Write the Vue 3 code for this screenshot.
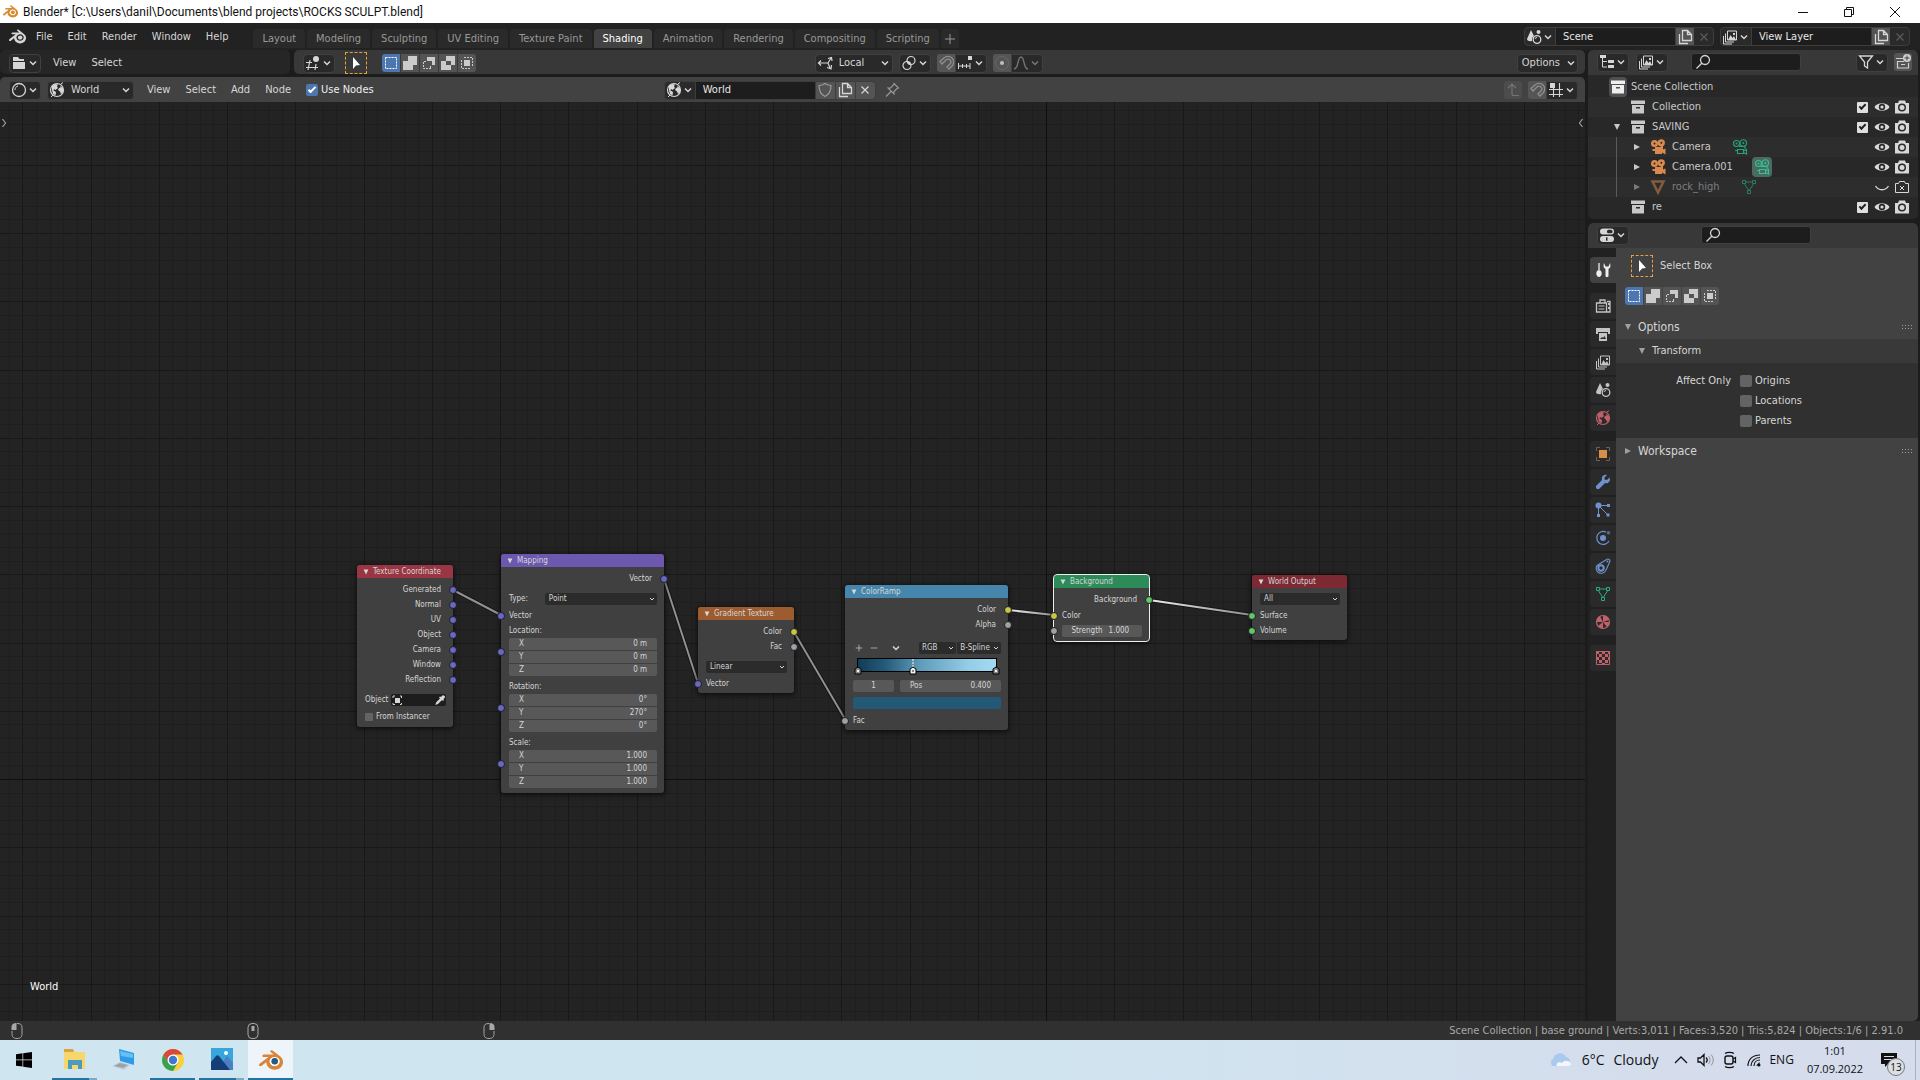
<template>
  <div class="screen">
    <header class="titlebar">
      <Ico name="blender" :size="15" class="orange" />
      <span class="title">Blender* [C:\Users\danil\Documents\blend projects\ROCKS SCULPT.blend]</span>
      <button class="win" aria-label="Minimize"><Ico name="min" :size="12" /></button>
      <button class="win" aria-label="Restore"><Ico name="restore" :size="12" /></button>
      <button class="win" aria-label="Close"><Ico name="close" :size="12" /></button>
    </header>

    <div class="topbar">
      <Ico name="blender" :size="17" />
      <nav class="menus main-menu">
        <button v-for="m in mainMenu" :key="m">{{ m }}</button>
      </nav>
      <div class="tabs">
        <button v-for="t in workspaces" :key="t" :class="{ active: t === workspace }" @click="workspace = t">{{ t }}</button>
        <button class="add" aria-label="Add workspace"><Ico name="plus" :size="12" /></button>
      </div>
      <div class="fill"></div>
      <div v-for="d in datablocks" :key="d.label" class="datablock">
        <button class="drop" :aria-label="d.label"><Ico :name="d.icon" /><Ico name="chev" :size="12" /></button>
        <input v-model="d.name" :aria-label="d.label">
        <button class="act" aria-label="New"><Ico name="copy" /></button>
        <button class="off" aria-label="Remove"><Ico name="x" /></button>
      </div>
    </div>

    <main class="work">
      <section class="left">
        <div class="row-one">
          <div class="bar files">
            <button class="box" aria-label="Editor type"><Ico name="folder" /><Ico name="chev" :size="12" /></button>
            <nav class="menus">
              <button>View</button>
              <button>Select</button>
            </nav>
          </div>
          <div class="bar view3d">
            <button class="box" aria-label="Editor type"><Ico name="viewport" /><Ico name="chev" :size="12" /></button>
            <button class="tool" aria-label="Select Box"><Ico name="cursor" /></button>
            <div class="modes">
              <button v-for="m in modes" :key="m" :class="{ active: m === mode }" :aria-label="m" @click="mode = m"><Ico :name="m" /></button>
            </div>
            <div class="space-a"></div>
            <div class="group">
              <div class="box pick local">
                <Ico name="axes" />
                <select aria-label="Orientation"><option>Local</option></select>
                <Ico name="chev" :size="12" />
              </div>
              <button class="box" aria-label="Pivot"><Ico name="link" /><Ico name="chev" :size="12" /></button>
              <div class="joined">
                <button class="lit" aria-label="Snap"><Ico name="magnet" /></button>
                <button class="box" aria-label="Snapping"><Ico name="snap" /><Ico name="chev" :size="12" /></button>
              </div>
              <div class="joined">
                <button class="lit" aria-label="Proportional editing"><Ico name="dot" /></button>
                <button class="box faded" aria-label="Falloff"><Ico name="curve" /><Ico name="chev" :size="12" /></button>
              </div>
            </div>
            <div class="space-b"></div>
            <button class="box options">Options<Ico name="chev" :size="12" /></button>
          </div>
        </div>

        <div class="bar shader">
          <button class="box" aria-label="Editor type"><Ico name="sphere" /><Ico name="chev" :size="12" /></button>
          <div class="box pick kind">
            <Ico name="world" />
            <select aria-label="Shader type"><option>World</option></select>
            <Ico name="chev" :size="12" />
          </div>
          <nav class="menus">
            <button>View</button>
            <button>Select</button>
            <button>Add</button>
            <button>Node</button>
          </nav>
          <label class="check blue"><input v-model="useNodes" type="checkbox">Use Nodes</label>
          <div class="space-c"></div>
          <div class="datablock wide">
            <button class="drop" aria-label="Browse world"><Ico name="world" /><Ico name="chev" :size="12" /></button>
            <input v-model="world" aria-label="World">
            <button class="act dim" aria-label="Fake user"><Ico name="shield" /></button>
            <button class="act" aria-label="New world"><Ico name="copy" /></button>
            <button class="act" aria-label="Unlink"><Ico name="x" /></button>
          </div>
          <button class="pin" aria-label="Pin"><Ico name="pin" /></button>
          <div class="space-d"></div>
          <div class="group">
            <button class="lit parent" aria-label="Parent tree"><Ico name="up" /></button>
            <div class="joined">
              <button class="lit" aria-label="Snap"><Ico name="magnet" /></button>
              <button class="box" aria-label="Snap element"><Ico name="gridsnap" /><Ico name="chev" :size="12" /></button>
            </div>
          </div>
        </div>

        <div class="canvas">
          <svg class="layer">
            <defs>
              <linearGradient id="wire" x1="0" x2="1"><stop offset="0" stop-color="#eee" /><stop offset="1" stop-color="#8c8c8c" /></linearGradient>
            </defs>
            <line v-for="l in gridLines" :key="l.key" :x1="l.x1" :y1="l.y1" :x2="l.x2" :y2="l.y2" :stroke="l.color" />
            <g v-for="l in links" :key="l.x1" stroke-linecap="round">
              <line :x1="l.x1" :y1="l.y1" :x2="l.x2" :y2="l.y2" stroke="#151515" stroke-width="4" />
              <line :x1="l.x1" :y1="l.y1" :x2="l.x2" :y2="l.y2" :stroke="l.lit ? 'url(#wire)' : '#909090'" stroke-width="2" />
            </g>
          </svg>

          <article v-for="n in nodes" :key="n.title" class="node" :class="{ selected: n.selected }" :style="{ left: n.x + 'px', top: n.y + 'px', width: n.w + 'px' }">
            <header :style="{ background: n.color }"><Ico name="down" :size="8" />{{ n.title }}</header>
            <div class="node-body">
              <template v-for="(r, i) in n.rows" :key="i">
                <div v-if="r.type === 'out'" class="socket-row out">{{ r.label }}<i class="socket" :class="r.socket"></i></div>
                <div v-else-if="r.type === 'in'" class="socket-row in"><i class="socket" :class="r.socket"></i>{{ r.label }}</div>
                <div v-else-if="r.type === 'select'" class="node-select" :class="{ tight: r.tight }">
                  <span v-if="r.label">{{ r.label }}</span>
                  <div class="field pick"><select :aria-label="r.label || r.value"><option>{{ r.value }}</option></select><Ico name="chev" :size="8" /></div>
                </div>
                <div v-else-if="r.type === 'vector'" class="vector">
                  <p>{{ r.label }}:</p>
                  <div class="vector-fields">
                    <i class="socket purple"></i>
                    <label v-for="(v, a) in r.fields" :key="a"><span>{{ a }}</span><input :value="v"></label>
                  </div>
                </div>
                <label v-else-if="r.type === 'object'" class="object">Object
                  <span class="object-field"><Ico name="object" :size="10" /><input aria-label="Object"><Ico name="dropper" :size="10" /></span>
                </label>
                <label v-else-if="r.type === 'check'" class="check small"><input type="checkbox">{{ r.label }}</label>
                <label v-else-if="r.type === 'number'" class="strength"><i class="socket gray"></i><span>{{ r.label }}</span><input :value="r.value"></label>
                <div v-else-if="r.type === 'ramp'" class="ramp">
                  <div class="ramp-tools">
                    <button aria-label="Add stop"><Ico name="plus" :size="8" /></button>
                    <button aria-label="Remove stop"><Ico name="minus" :size="8" /></button>
                    <button class="more" aria-label="Tools"><Ico name="chev" :size="12" /></button>
                    <div class="field pick"><select aria-label="Color mode"><option>RGB</option></select><Ico name="chev" :size="8" /></div>
                    <div class="field pick"><select aria-label="Interpolation"><option>B-Spline</option></select><Ico name="chev" :size="8" /></div>
                  </div>
                  <div class="gradient">
                    <svg v-for="s in stops" :key="s" class="stop" :style="{ left: s + '%' }" width="8" height="18" viewBox="0 0 8 18">
                      <path v-if="s === 40" d="M4 2v9" stroke="#fff" stroke-dasharray="2 1" />
                      <path d="M1 17v-5l3-2 3 2v5z" :fill="s === 40 ? '#eee' : '#888'" stroke="#000" />
                      <path d="M3 13h2v2H3z" :fill="s === 40 ? '#888' : '#eee'" />
                    </svg>
                  </div>
                  <div class="ramp-fields">
                    <input value="1" aria-label="Stop">
                    <label><span>Pos</span><input value="0.400"></label>
                  </div>
                  <button class="swatch" aria-label="Stop color"></button>
                </div>
              </template>
            </div>
          </article>

          <button class="toggle toolbar" aria-label="Show toolbar"><Ico name="right-chev" :size="8" /></button>
          <button class="toggle sidebar" aria-label="Show sidebar"><Ico name="left-chev" :size="8" /></button>
          <span class="context">World</span>
        </div>
      </section>

      <aside class="right">
        <section class="outliner">
          <div class="bar">
            <button class="box" aria-label="Editor type"><Ico name="tree" /><Ico name="chev" :size="12" /></button>
            <button class="box" aria-label="Display mode"><Ico name="layers" /><Ico name="chev" :size="12" /></button>
            <div class="before-search"></div>
            <label class="search"><Ico name="search" /><input aria-label="Search outliner"></label>
            <div class="after-search"></div>
            <button class="box" aria-label="Filter"><Ico name="filter" /><Ico name="chev" :size="12" /></button>
            <button class="lit" aria-label="New collection"><Ico name="newcoll" /></button>
          </div>
          <ul class="tree">
            <li v-for="r in tree" :key="r.name" :class="['depth' + r.depth, { muted: r.hidden }]">
              <span class="arrow"><Ico v-if="r.arrow" :name="r.arrow" :size="10" /></span>
              <span class="tree-icon" :class="{ ringed: r.depth === 0, orange: r.depth === 3 }"><Ico :name="r.icon" /></span>
              <span>{{ r.name }}</span>
              <span v-if="r.data" class="data" :class="{ lens: r.lens }"><Ico :name="r.data" /></span>
              <span class="fill"></span>
              <template v-if="r.depth > 0">
                <input v-if="r.depth < 3" type="checkbox" class="white" checked :aria-label="'Include ' + r.name">
                <button :aria-label="'Hide ' + r.name"><Ico :name="r.hidden ? 'eye-off' : 'eye'" /></button>
                <button :aria-label="'Render ' + r.name"><Ico :name="r.hidden ? 'photo-off' : 'photo'" /></button>
              </template>
            </li>
          </ul>
        </section>

        <section class="properties">
          <div class="bar">
            <button class="box" aria-label="Editor type"><Ico name="props" /><Ico name="chev" :size="12" /></button>
            <div class="before-search"></div>
            <label class="search"><Ico name="search" /><input aria-label="Search properties"></label>
            <div class="after-search"></div>
          </div>
          <div class="prop-main">
            <div class="prop-tabs">
              <button v-for="t in propTabs" :key="t.icon" :class="[t.tint, { active: t.icon === 'tools', apart: t.apart }]" :aria-label="t.icon"><Ico :name="t.icon" /></button>
            </div>
            <div class="panels">
              <div class="tool-row"><span class="tool"><Ico name="cursor" /></span>Select Box</div>
              <div class="modes">
                <button v-for="m in modes" :key="m" :class="{ active: m === mode }" :aria-label="m" @click="mode = m"><Ico :name="m" /></button>
              </div>
              <h2><Ico name="down" :size="10" />Options<span class="fill"></span><Ico name="grip" :size="12" /></h2>
              <h3><Ico name="down" :size="10" />Transform</h3>
              <fieldset>
                <legend>Affect Only</legend>
                <label v-for="o in ['Origins', 'Locations', 'Parents']" :key="o" class="check"><input type="checkbox">{{ o }}</label>
              </fieldset>
              <h2><Ico name="play" :size="10" />Workspace<span class="fill"></span><Ico name="grip" :size="12" /></h2>
            </div>
          </div>
        </section>
      </aside>
    </main>

    <footer class="status">
      <div class="hints"><Ico name="mouse-l" /><Ico name="mouse-m" /><Ico name="mouse-r" /></div>
      <span>Scene Collection | base ground | Verts:3,011 | Faces:3,520 | Tris:5,824 | Objects:1/6 | 2.91.0</span>
    </footer>

    <div class="taskbar">
      <button class="start" aria-label="Start"><Ico name="windows" /></button>
      <button v-for="a in apps" :key="a.icon" :class="['app', a.state]" :aria-label="a.icon"><Ico :name="a.icon" :size="24" /></button>
      <div class="fill"></div>
      <div class="weather"><Ico name="cloud" :size="24" /><span>6°C</span><span>Cloudy</span></div>
      <div class="tray">
        <Ico name="tray-up" :size="16" />
        <Ico name="speaker" :size="18" />
        <Ico name="meet" :size="18" />
        <Ico name="wifi" :size="16" />
        <span>ENG</span>
      </div>
      <div class="clock"><span>1:01</span><span>07.09.2022</span></div>
      <button class="notify" aria-label="Notifications"><Ico name="note" :size="18" /><b>13</b></button>
    </div>
  </div>
</template>

<script setup>
import { h, ref, reactive } from 'vue'

const line = (d, extra = '') => `<path d="${d}" fill="none" stroke="currentColor" ${extra}/>`
const solid = (d, extra = '') => `<path d="${d}" fill="currentColor" ${extra}/>`

const globe = '<circle cx="8" cy="8" r="6.5" fill="none" stroke="currentColor" stroke-width="1.2"/>'
  + solid('M3 4l3-2 3 .5-1 2 1 1.5-2.5 2L5 7l-.5 1.5L7 10l-.5 3.5L4 12 3 8zM11 4l3 2v4l-2 2-1-2.5-2-1.5 1-2 1.5-.5z')

const icons = {
  blender: ['0 0 24 24', solid('M12.51 13.214c.046-.8.438-1.506 1.03-2.006a3.424 3.424 0 0 1 2.212-.79c.85 0 1.631.3 2.211.79.592.5.983 1.206 1.028 2.005.045.823-.285 1.586-.865 2.153a3.389 3.389 0 0 1-2.374.938 3.393 3.393 0 0 1-2.376-.938c-.58-.567-.91-1.33-.865-2.152M7.35 14.831c.006.314.106.922.256 1.398a7.372 7.372 0 0 0 1.593 2.757 8.227 8.227 0 0 0 2.787 2.001 8.947 8.947 0 0 0 3.66.76 8.964 8.964 0 0 0 3.657-.772 8.285 8.285 0 0 0 2.785-2.01 7.428 7.428 0 0 0 1.592-2.762 6.964 6.964 0 0 0 .25-3.074 7.123 7.123 0 0 0-1.016-2.779 7.764 7.764 0 0 0-1.852-2.043h.002L13.566 2.55l-.02-.015c-.492-.378-1.319-.376-1.86.002-.547.382-.609 1.015-.123 1.415l-.001.001 3.126 2.543-9.53.01h-.013c-.788.001-1.545.518-1.695 1.172-.154.665.38 1.217 1.2 1.22V8.9l4.83-.01-8.62 6.617-.034.025c-.813.622-1.075 1.658-.563 2.313.52.667 1.625.668 2.447.004L7.414 14s-.069.52-.063.831zm12.09 1.741c-.97.988-2.326 1.548-3.795 1.55-1.47.004-2.827-.552-3.797-1.538a4.51 4.51 0 0 1-1.036-1.622 4.282 4.282 0 0 1 .282-3.519 4.702 4.702 0 0 1 1.153-1.371c.942-.768 2.141-1.183 3.396-1.185 1.256-.002 2.455.41 3.398 1.175.48.391.87.854 1.152 1.367a4.28 4.28 0 0 1 .522 1.706 4.236 4.236 0 0 1-.239 1.811 4.54 4.54 0 0 1-1.035 1.626')],
  min: ['0 0 12 12', line('M1 6.5h10')],
  restore: ['0 0 12 12', line('M1.5 3.5h7v7h-7zM3.5 3.5v-2h7v7h-2')],
  close: ['0 0 12 12', line('M1 1l10 10M11 1L1 11')],
  plus: ['0 0 12 12', line('M6 1v10M1 6h10')],
  minus: ['0 0 12 12', line('M1 6h10')],
  chev: ['0 0 12 12', line('M3 4.5l3 3 3-3', 'stroke-width="1.5"')],
  'right-chev': ['0 0 10 10', line('M3 0l4 5-4 5', 'stroke-width="1.3"')],
  'left-chev': ['0 0 10 10', line('M7 0L3 5l4 5', 'stroke-width="1.3"')],
  down: ['0 0 10 10', solid('M2 2h6L5 8z')],
  play: ['0 0 10 10', solid('M2 2v6l6-3z')],
  x: ['0 0 16 16', line('M4.5 4.5l7 7M11.5 4.5l-7 7', 'stroke-width="1.2"')],
  copy: ['0 0 16 16', line('M5.5 1.5h5l4 4v6h-9zM10.5 1.5v4h4M2.5 5v9.5H11', 'stroke-width="1.3"')],
  scene: ['0 0 16 16', solid('M5 1l3 6a5 5 0 0 0-2 5c-2 .5-5 0-5-2z') + '<circle cx="12.5" cy="3" r="2" fill="currentColor"/><circle cx="11" cy="10.5" r="3.8" fill="none" stroke="currentColor" stroke-width="1.3"/>' + line('M9 10a2 2 0 0 1 2-1.5')],
  layers: ['0 0 16 16', line('M5.5 2h9v9h-9zM3.5 4.5V13H12M1.5 7v8H10') + solid('M6 11l2.5-5 2 3L12 7l2 4zM11 4h2v2h-2z')],
  folder: ['0 0 16 16', solid('M2 2h5l1.5 2H13v2H2zM2 7h12v7H2z')],
  viewport: ['0 0 16 16', '<circle cx="11" cy="4" r="3" fill="currentColor"/>' + line('M1 7.5h6M1 12.5h12M5 5L3 15M11 9l-1 6', 'stroke-width="1.2"')],
  cursor: ['0 0 16 16', solid('M5 2v12l3-3.5 4-.5z')],
  set: ['0 0 16 16', line('M2.5 2.5h11v11h-11z', 'stroke-dasharray="2 1"')],
  extend: ['0 0 16 16', solid('M6 1h9v9h-4v5H1V6h5z')],
  subtract: ['0 0 16 16', solid('M6 2h8v8h-3V6H6z') + line('M10 13.5H2.5v-7H5M9.5 11v2.5', 'stroke-dasharray="2 1"')],
  difference: ['0 0 16 16', solid('M6 1h9v9h-4v5H1V6h5zM6 6v4h5V6z', 'fill-rule="evenodd"')],
  intersect: ['0 0 16 16', solid('M5 5h6v6H5z') + line('M5 2.5h8.5V11M11 13.5H2.5V5', 'stroke-dasharray="2 1"')],
  axes: ['0 0 16 16', line('M11 8H2M11 8l3-5M11 8l2 5M4 5.5L1.5 8 4 10.5M11 3.5l3.500-1 .5 3.5M10 12.5l4 1.5.5-4', 'stroke-width="1.2"')],
  link: ['0 0 16 16', '<circle cx="10" cy="5.5" r="4" fill="none" stroke="currentColor" stroke-width="1.2"/><circle cx="6" cy="10.5" r="4" fill="none" stroke="currentColor" stroke-width="1.2"/><circle cx="8" cy="8" r="1.5" fill="currentColor"/>'],
  magnet: ['0 0 16 16', line('M2 6.5l4-3.5a5.500 5.500 0 0 1 8 8l-3 3-2-2 3-3a2.500 2.500 0 0 0-4-4L4 9z', 'stroke-width="1.3"')],
  snap: ['0 0 16 16', line('M1 11h12M1.5 8v6M5.5 9v4M9.5 9v4M13 8v6') + solid('M11 1h4v4h-4z')],
  dot: ['0 0 16 16', '<circle cx="8" cy="8" r="6.5" fill="none" stroke="currentColor" opacity=".3"/><circle cx="8" cy="8" r="2" fill="#c0c0c0"/>'],
  curve: ['0 0 16 16', line('M1 14c5 0 3-12 7-12s2 12 7 12', 'stroke-width="1.3"')],
  sphere: ['0 0 16 16', '<circle cx="8" cy="8" r="6.5" fill="none" stroke="currentColor" stroke-width="1.3"/>' + line('M4 8c0-2 1-3.5 3-4')],
  world: ['0 0 16 16', globe + line('M12 2l2-1.500M2 15l2-2')],
  shield: ['0 0 16 16', line('M8 1.5c2 1.500 4 2 6 2 0 6-2 9-6 11-4-2-6-5-6-11 2 0 4-.5 6-2z', 'stroke-width="1.2"')],
  pin: ['0 0 16 16', line('M10 1.5L14.5 6l-1.500.5-3 3V12L4 6h2.500l3-3zM7 9.500l-5 5', 'stroke-width="1.1"')],
  up: ['0 0 16 16', line('M7 13V2M3 6l4-4 4 4M7 13.5h7', 'stroke-width="1.2"')],
  gridsnap: ['0 0 16 16', line('M1 7.5h14M1 12.5h14M5.5 5v10M11.5 1v14', 'stroke-width="1.1"') + solid('M2 1h5v5H2z')],
  tree: ['0 0 16 16', solid('M1 1h6v3H1zM9 6h6v3H9zM9 11h6v3H9z') + line('M3.5 4v9H8M3.5 7.5H8')],
  search: ['0 0 16 16', line('M6.5 9.5l-5 5M10 1.5a4.5 4.5 0 1 0 .01 0z', 'stroke-width="1.3"')],
  filter: ['0 0 16 16', line('M1.5 2h13l-5 6v6l-3-2V8z', 'stroke-width="1.3"')],
  newcoll: ['0 0 16 16', line('M1 4.5h7M2.5 7v7h11V9M2 7.5h7M6 10.5h4', 'stroke-width="1.2"') + '<circle cx="12" cy="4" r="4" fill="currentColor"/><path d="M12 1.5v5M9.5 4h5" stroke="#444"/>'],
  box: ['0 0 16 16', solid('M1 1.5h14V5H1zM2 6h12v8.5H2zM6 8v1.5h4V8z', 'fill-rule="evenodd"')],
  movie: ['0 0 16 16', '<circle cx="4.5" cy="4.5" r="3.5" fill="currentColor"/><circle cx="11.3" cy="3.800" r="3.600" fill="currentColor"/><circle cx="4.5" cy="4.500" r="1" fill="#282828"/><circle cx="11.3" cy="3.800" r="1" fill="#282828"/>' + solid('M5 8h6v-1h2v3.500l2.500-1v6L12 13.500v1.500H5v-3H2.500v-2H5z')],
  movieline: ['0 0 16 16', '<g fill="none" stroke="currentColor" stroke-width="1.1"><circle cx="4.5" cy="4.5" r="3"/><circle cx="11.3" cy="4" r="3.200"/><path d="M5.500 10.500h6v4h-6zM11.500 12l3-1.500v4.500l-3-1.500M7 7.500h6v2.500M3 11.500h2"/></g>' + '<circle cx="4.5" cy="4.5" r="1" fill="currentColor"/><circle cx="11.3" cy="4" r="1" fill="currentColor"/>'],
  cone: ['0 0 16 16', line('M2.5 2.5h11L8 13.500z', 'stroke-width="2.5"')],
  mesh: ['0 0 16 16', line('M1.5 1.5h3v3h-3zM11.5 1.5h3v3h-3zM6.5 11.5h3v3h-3zM5 3h6M3.5 5l4 6M12.5 5l-4 6')],
  eye: ['0 0 16 16', solid('M.5 8C3 3 13 3 15.5 8 13 13 3 13 .5 8zM8 4.800a3.200 3.200 0 1 0 0 6.400 3.200 3.200 0 0 0 0-6.400z', 'fill-rule="evenodd"') + '<circle cx="8" cy="8" r="1.6" fill="currentColor"/>'],
  'eye-off': ['0 0 16 16', line('M1.5 7c3 5 10 5 13 0', 'stroke-width="1.3"')],
  photo: ['0 0 16 16', solid('M1 4h3l1-2.500h6L12 4h3v10.500H1zM8 4.500a4 4 0 1 0 0 8 4 4 0 0 0 0-8z', 'fill-rule="evenodd"') + '<circle cx="8" cy="8.5" r="2.500" fill="currentColor"/>'],
  'photo-off': ['0 0 16 16', line('M1.5 4.5h3l1-2h5l1 2h3v9h-13zM6 7l4 4M10 7l-4 4')],
  props: ['0 0 16 16', '<rect x="1" y="1.5" width="14" height="6" rx="3" fill="currentColor"/><rect x="1" y="9" width="14" height="6" rx="3" fill="currentColor"/>' + '<rect x="8" y="2.8" width="5.5" height="3.4" rx="1.5" fill="#2b2b2b"/><rect x="7" y="10.3" width="1.5" height="3.4" fill="#2b2b2b"/>'],
  tools: ['0 0 16 16', line('M4 1v8', 'stroke-width="1.3"') + solid('M2.5 8.5h3c2 2 1.500 6-1.500 6.500-3-.5-3.500-4.500-1.500-6.500zM9 1c-1 4 0 5 1.500 6v7c0 1.500 3 1.500 3 0V7c1.500-1 2.500-2 1.500-6l-1.500 3.500h-3z')],
  render: ['0 0 16 16', line('M1.5 5h10v9h-10zM5 5V2h5v3M12 3.5h3V14h-3', 'stroke-width="1.3"') + line('M3.5 8h6M3.5 11h6') + solid('M13 5h2v2h-2zM13 9h2v2h-2z')],
  output: ['0 0 16 16', solid('M1 2h14v6h-2V6H3v2H1zM4 7h8v8H4zM5 13h6l-1.500-3L8 12l-1-1z', 'fill-rule="evenodd"')],
  objtab: ['0 0 16 16', '<rect x="4" y="4" width="8" height="8" fill="#d98d4a"/>' + line('M1.5 5V1.5H5M11 1.5h3.5V5M14.5 11v3.500H11M5 14.500H1.500V11', 'opacity=".7"')],
  wrench: ['0 0 16 16', solid('M14.5 3.500L12 6 9.500 5.500 9.500 3.500 12 1C9 0 6 2.500 7 6L1.500 11.500c-2 2 1 5 3 3L10 9c3.500 1 6-2 4.500-5.500z')],
  particles: ['0 0 16 16', '<circle cx="3.5" cy="3.5" r="3" fill="currentColor"/>' + line('M4 3.500h9M3.500 4v9M4 4l9 9') + solid('M12 2h3v3h-3zM2 12h3v3H2zM11.500 11.500h3v3h-3z')],
  physics: ['0 0 16 16', '<circle cx="8" cy="8" r="3" fill="currentColor"/><circle cx="13.5" cy="2.8" r="1.8" fill="currentColor" opacity=".6"/>' + line('M11 2a6.500 6.500 0 1 0 3 9', 'stroke-width="1.2"')],
  constraint: ['0 0 16 16', '<circle cx="6" cy="10" r="2.7" fill="none" stroke="currentColor" stroke-width="2"/>' + line('M2 7.500L12 1.200c2-.7 3.500 1 2.700 2.800L10.500 13a5 5 0 0 1-8.500-5.500z', 'stroke-width="1.1"') + '<circle cx="12.5" cy="3.5" r="1" fill="currentColor"/>'],
  material: ['0 0 16 16', '<circle cx="8" cy="8" r="6.5" fill="none" stroke="currentColor" stroke-width="1.2"/>' + solid('M8 8H1.500A6.500 6.500 0 0 1 5 2.200zM8 8V1.500a6.500 6.500 0 0 1 6 4.500zM8 8h6.500A6.500 6.500 0 0 1 12 13zM8 8v6.500a6.500 6.500 0 0 1-5-2.500z')],
  texture: ['0 0 16 16', line('M1.5 1.5h13v13h-13z') + solid('M1 1h3v3H1zM7 1h3v3H7zM4 4h3v3H4zM10 4h3v3h-3zM1 7h3v3H1zM7 7h3v3H7zM4 10h3v3H4zM10 10h3v3h-3zM13 1h2v3h-2zM13 7h2v3h-2zM7 13h3v2H7z')],
  grip: ['0 0 12 12', solid('M0 4h1v1H0zM3 4h1v1H3zM6 4h1v1H6zM9 4h1v1H9zM0 7h1v1H0zM3 7h1v1H3zM6 7h1v1H6zM9 7h1v1H9z')],
  object: ['0 0 10 10', solid('M3 3h5v5H3z') + line('M1 3V1h2M8 1h1.500v2M9.500 8v1.500H8M3 9.500H1V8')],
  dropper: ['0 0 10 10', solid('M9.500 1C8.500 0 7.500 0 6 2L5 1.500 4 2.500l1 1-4 4L.5 10 3 9l4-4 1 1 1-1L8.500 4c2-1.500 2-2 1-3z')],
  'mouse-l': ['0 0 16 16', line('M8 .5c3.500 0 5 1 5 4v6c0 3-1 5-5 5s-5-2-5-5V8') + solid('M2.500 7V4c0-2.500 2-4 5-4v7z')],
  'mouse-m': ['0 0 16 16', '<rect x="3" y=".5" width="10" height="15" rx="4" fill="none" stroke="currentColor"/>' + solid('M6.500 3h3v5h-3z')],
  'mouse-r': ['0 0 16 16', line('M8 .5c-3.500 0-5 1-5 4v6c0 3 1 5 5 5s5-2 5-5V8') + solid('M13.500 7V4c0-2.500-2-4-5-4v7z')],
  windows: ['0 0 16 16', solid('M0 2.200l6.500-.9v6.200H0zM7.200 1.200L16 0v7.500H7.200zM0 8.300h6.500v6.300L0 13.700zM7.200 8.300H16V16l-8.800-1.200z')],
  explorer: ['0 0 24 24', '<path d="M1 2h9l2 3h10v17H1z" fill="#f7d66b"/><path d="M1 2h9l1 3H1z" fill="#d9a441"/><path d="M5 22v-9h14v9h-4v-4H9v4z" fill="#4d9cc0"/>'],
  computer: ['0 0 24 24', '<path d="M7 1l15 4v12L8 13z" fill="#2f9be8"/><path d="M8 3l13 3v4L9 8z" fill="#65c0f5"/><path d="M0 18l8-4 10 3-6 5z" fill="#c3ccd3"/><path d="M2 18l6-3 8 2-5 3z" fill="#98a4ad"/>'],
  chrome: ['0 0 24 24', '<circle cx="12" cy="12" r="11" fill="#f9cf3e"/><path d="M2.500 6.500A11 11 0 0 1 21.500 6.500H12L7 15z" fill="#d8483b"/><path d="M2.500 6.500A11 11 0 0 0 12 23l5-8.500H7z" fill="#35a152"/><circle cx="12" cy="12" r="5.5" fill="#fff"/><circle cx="12" cy="12" r="4.2" fill="#4277cf"/>'],
  photos: ['0 0 24 24', '<path d="M1 1h22v22H1z" fill="#36a6dc"/><path d="M12 16l5-7 6 7v7H12z" fill="#4d7fc4"/><path d="M1 15l5-6c1-1 2-1 3 0l11 14H1z" fill="#153e77"/><circle cx="16" cy="6" r="2" fill="#fff"/>'],
  blendapp: ['0 0 24 24', ''],
  cloud: ['0 0 24 24', '<path d="M4 18a4 4 0 0 1 0-7 7 7 0 0 1 13-2 5 5 0 0 1 2 9z" fill="#a9c9ee"/><path d="M8 18c-2-3 3-5 5-3 2-4 9-2 9 1 0 1-1 2-3 2z" fill="#f3f6fa"/>'],
  'tray-up': ['0 0 16 16', line('M2 11l6-6 6 6', 'stroke-width="1.3"')],
  speaker: ['0 0 18 18', line('M2 7h2.500L8 3.500v11L4.500 11H2zM10 6.500c1.500 1.500 1.500 3.500 0 5', 'stroke-width="1.3"') + line('M12.500 5c2 2.500 2 5.500 0 8M15 3.500c3 3.500 3 7.500 0 11', 'opacity=".35"')],
  meet: ['0 0 18 18', '<rect x="4" y="5" width="8" height="8" rx="2" fill="none" stroke="currentColor" stroke-width="1.4"/>' + line('M12 8l2.500-1.500v5L12 10M4 2.500c2-1.500 7-1.500 9 0M4 15.500c2 1.500 7 1.500 9 0', 'stroke-width="1.2"')],
  wifi: ['0 0 16 16', line('M2 14C2 7 7 3 14 3M5 14c0-5 4-8.500 9-8.500M8 14c0-3.500 2.500-6 6-6', 'stroke-width="1.2"') + line('M11 14c0-1.500 1-3 3-3') + '<circle cx="13" cy="13" r="1.5" fill="currentColor"/>'],
  note: ['0 0 18 18', solid('M1 2h16v11H8l-3 3v-3H1zM4 5v1h10V5zM4 8v1h10V8z', 'fill-rule="evenodd"')]
}
// the app icon has a blue eye under the orange mark
icons.blendapp[1] = '<circle cx="15.7" cy="13.3" r="6" fill="#fff"/><g color="#d98436">' + icons.blender[1] + '</g><circle cx="15.7" cy="13.3" r="3.2" fill="#235a86"/>'

const Ico = ({ name, size = 16 }) => {
  const [viewBox, innerHTML] = icons[name]
  return h('svg', { width: size, height: size, viewBox, innerHTML, 'aria-hidden': 'true' })
}
Ico.props = ['name', 'size']

const mainMenu = ['File', 'Edit', 'Render', 'Window', 'Help']
const workspaces = ['Layout', 'Modeling', 'Sculpting', 'UV Editing', 'Texture Paint', 'Shading', 'Animation', 'Rendering', 'Compositing', 'Scripting']
const workspace = ref('Shading')
const datablocks = reactive([
  { name: 'Scene', label: 'Active scene', icon: 'scene' },
  { name: 'View Layer', label: 'Active view layer', icon: 'layers' }
])
const modes = ['set', 'extend', 'subtract', 'difference', 'intersect']
const mode = ref('set')
const useNodes = ref(true)
const world = ref('World')

// grid is anchored on the world origin, every fifth line is stronger
const origin = { x: 1046, y: 677 }
const step = 13.65
const gridLines = []
for (let pass = 0; pass < 2; pass++) {
  for (let i = -160; i <= 160; i++) {
    const major = i % 5 === 0
    if (major !== (pass === 1)) continue
    const color = i === 0 ? '#0f0f0f' : major ? '#181818' : '#1e1e1e'
    const x = Math.round(origin.x + i * step) + 0.5
    const y = Math.round(origin.y + i * step) + 0.5
    if (x > 0) gridLines.push({ key: 'v' + i, x1: x, x2: x, y1: 0, y2: 2160, color })
    if (y > 0) gridLines.push({ key: 'h' + i, x1: 0, x2: 3840, y1: y, y2: y, color })
  }
}

const out = (label, socket) => ({ type: 'out', label, socket })
const inp = (label, socket) => ({ type: 'in', label, socket })
const nodes = [
  {
    title: 'Texture Coordinate', x: 357, y: 463, w: 96, color: '#9a3543',
    rows: [
      ...['Generated', 'Normal', 'UV', 'Object', 'Camera', 'Window', 'Reflection'].map(l => out(l, 'purple')),
      { type: 'object' },
      { type: 'check', label: 'From Instancer' }
    ]
  },
  {
    title: 'Mapping', x: 501, y: 452, w: 163, color: '#6c58ae',
    rows: [
      out('Vector', 'purple'),
      { type: 'select', label: 'Type:', value: 'Point' },
      inp('Vector', 'purple'),
      { type: 'vector', label: 'Location', fields: { X: '0 m', Y: '0 m', Z: '0 m' } },
      { type: 'vector', label: 'Rotation', fields: { X: '0°', Y: '270°', Z: '0°' } },
      { type: 'vector', label: 'Scale', fields: { X: '1.000', Y: '1.000', Z: '1.000' } }
    ]
  },
  {
    title: 'Gradient Texture', x: 698, y: 505, w: 96, color: '#9c5c30',
    rows: [out('Color', 'yellow'), out('Fac', 'gray'), { type: 'select', value: 'Linear' }, inp('Vector', 'purple')]
  },
  {
    title: 'ColorRamp', x: 845, y: 483, w: 163, color: '#4686ad',
    rows: [out('Color', 'yellow'), out('Alpha', 'gray'), { type: 'ramp' }, inp('Fac', 'gray')]
  },
  {
    title: 'Background', x: 1054, y: 473, w: 95, color: '#2c8b58', selected: true,
    rows: [out('Background', 'green'), inp('Color', 'yellow'), { type: 'number', label: 'Strength', value: '1.000' }]
  },
  {
    title: 'World Output', x: 1252, y: 473, w: 95, color: '#7c2934',
    rows: [{ type: 'select', value: 'All', tight: true }, inp('Surface', 'green'), inp('Volume', 'green')]
  }
]
const stops = [0, 40, 100]

const links = [
  { x1: 453, y1: 488, x2: 501, y2: 513 },
  { x1: 664, y1: 477, x2: 698, y2: 581 },
  { x1: 794, y1: 530, x2: 845, y2: 617 },
  { x1: 1008, y1: 508, x2: 1054, y2: 513, lit: true },
  { x1: 1149, y1: 498, x2: 1252, y2: 513, lit: true }
]

const tree = [
  { name: 'Scene Collection', icon: 'box', depth: 0 },
  { name: 'Collection', icon: 'box', depth: 1 },
  { name: 'SAVING', icon: 'box', depth: 1, arrow: 'down' },
  { name: 'Camera', icon: 'movie', depth: 3, arrow: 'play', data: 'movieline' },
  { name: 'Camera.001', icon: 'movie', depth: 3, arrow: 'play', data: 'movieline', lens: true },
  { name: 'rock_high', icon: 'cone', depth: 3, arrow: 'play', data: 'mesh', hidden: true },
  { name: 're', icon: 'box', depth: 1 }
]

const propTabs = [
  { icon: 'tools' },
  { icon: 'render', apart: true },
  { icon: 'output' },
  { icon: 'layers' },
  { icon: 'scene' },
  { icon: 'world', tint: 'red' },
  { icon: 'objtab', tint: 'orange', apart: true },
  { icon: 'wrench', tint: 'azure' },
  { icon: 'particles', tint: 'azure' },
  { icon: 'physics', tint: 'azure' },
  { icon: 'constraint', tint: 'azure' },
  { icon: 'mesh', tint: 'mint' },
  { icon: 'material', tint: 'red' },
  { icon: 'texture', tint: 'red', apart: true }
]

const apps = [
  { icon: 'explorer', state: 'many' },
  { icon: 'computer' },
  { icon: 'chrome', state: 'open' },
  { icon: 'photos', state: 'many' },
  { icon: 'blendapp', state: 'current' }
]
</script>

<style>
body {
  margin: 0;
  background: #1c1c1c;
}
</style>

<style scoped>
.screen {
  display: flex;
  flex-direction: column;
  height: 100vh;
  overflow: hidden;
  background: #1c1c1c;
  color: #d6d6d6;
  font-family: "DejaVu Sans Condensed", "DejaVu Sans", sans-serif;
  font-size: 11px;
  line-height: 16px;
}
.screen *, .screen *::before {
  box-sizing: border-box;
}
button, input, select {
  margin: 0;
  padding: 0;
  border: 0;
  background: none;
  color: inherit;
  font: inherit;
  min-width: 0;
  border-radius: 0;
  appearance: none;
  outline: none;
}
svg {
  display: block;
  flex: none;
}
button {
  display: flex;
  align-items: center;
  justify-content: center;
  white-space: nowrap;
}
.fill {
  flex: 1;
}
.orange {
  color: #d98a4e;
}

/* window title */
.titlebar {
  display: flex;
  align-items: center;
  flex: none;
  height: 23px;
  padding: 0 2px 0 3px;
  background: #fff;
  color: #111;
  font-family: Roboto, sans-serif;
  font-size: 12px;
}
.title {
  flex: 1;
  padding-left: 5px;
}
.titlebar .orange {
  color: #d98a2e;
}
.win {
  width: 46px;
  height: 20px;
}

/* top bar */
.topbar {
  display: flex;
  align-items: center;
  flex: none;
  height: 27px;
  padding: 0 10px 0 9px;
  background: #222;
}
.menus {
  display: flex;
  gap: 15px;
}
.main-menu {
  padding: 0 25px 0 10px;
}
.tabs {
  display: flex;
  align-self: flex-end;
  gap: 2px;
  padding-bottom: 2px;
}
.tabs button {
  height: 19px;
  padding: 0 9px;
  border-radius: 4px 4px 0 0;
  background: #2a2a2a;
  color: #989898;
}
.tabs .active {
  background: #424242;
  color: #fff;
}
.tabs .add {
  padding: 0 3px;
}
.datablock {
  display: flex;
  height: 19px;
  margin-left: 6px;
  border: 1px solid #3d3d3d;
  border-radius: 4px;
  background: #2a2a2a;
  overflow: hidden;
}
.datablock button {
  width: 19px;
}
.datablock .drop {
  width: 30px;
}
.datablock input {
  width: 120px;
  padding: 0 7px;
  border-left: 1px solid #3d3d3d;
  background: #1d1d1d;
  color: #e6e6e6;
}
.datablock .act {
  border-left: 1px solid #3d3d3d;
  background: #545454;
}
.datablock .off {
  color: #5c5c5c;
}
.datablock .dim, .pin {
  color: #9a9a9a;
}
.datablock.wide {
  margin: 0;
}
.wide button {
  width: 20px;
}
.pin {
  margin-left: 8px;
}

/* editor headers */
.work {
  display: flex;
  flex: 1;
  gap: 3px;
  min-height: 0;
  padding-right: 2px;
}
.left {
  display: flex;
  flex: 1;
  flex-direction: column;
  min-width: 0;
}
.row-one {
  display: flex;
  flex: none;
  gap: 4px;
  padding-bottom: 3px;
}
.bar {
  display: flex;
  align-items: center;
  flex: none;
  height: 24px;
  padding: 2px 7px 0 9px;
  border-radius: 5px 5px 0 0;
  background: #383838;
}
.files {
  width: 290px;
  gap: 12px;
  border-radius: 5px;
  background: #262626;
}
.view3d {
  flex: 1;
  border-radius: 5px;
}
.shader {
  height: 25px;
  padding-top: 1px;
  background: #424242;
}
.box {
  display: flex;
  align-items: center;
  flex: none;
  height: 19px;
  padding: 0 1px;
  border: 1px solid #404040;
  border-radius: 4px;
  background: #292929;
}
.view3d .tool {
  margin: 0 15px 0 10px;
}
.tool {
  display: flex;
  align-items: center;
  justify-content: center;
  flex: none;
  width: 22px;
  height: 22px;
  border: 1px dashed #e5a23c;
  color: #fff;
}
.modes {
  display: flex;
  flex: none;
  gap: 1px;
}
.modes button {
  width: 18px;
  height: 18px;
  background: #545454;
  color: #cbcbcb;
}
.modes button:first-child {
  border-radius: 3px 0 0 3px;
}
.modes button:last-child {
  border-radius: 0 3px 3px 0;
}
.modes .active {
  background: #4c76b0;
  color: #fff;
}
.space-a {
  flex: 5;
}
.space-b {
  flex: 7;
}
.space-c {
  flex: 12;
}
.space-d {
  flex: 25;
}
.group, .joined {
  display: flex;
  align-items: center;
}
.group {
  gap: 6px;
}
.joined .box {
  border-radius: 0 4px 4px 0;
}
.lit {
  width: 18px;
  height: 18px;
  border-radius: 3px 0 0 3px;
  background: #555;
  color: #8f8f8f;
}
.lit.parent {
  border-radius: 3px;
  background: #4c4c4c;
  color: #757575;
}
.faded {
  color: #777;
}
.pick select {
  flex: 1;
}
.local {
  width: 78px;
}
.local select, .kind select {
  padding-left: 6px;
}
.options {
  gap: 5px;
  padding: 0 0 0 4px;
}
.kind {
  width: 87px;
  margin: 0 13px 0 6px;
}
.check {
  display: flex;
  align-items: center;
  gap: 3px;
}
.shader .check {
  margin-left: 15px;
}
.check input {
  width: 12px;
  height: 12px;
  border-radius: 2px;
  background: #636363;
}
.blue {
  color: #eee;
}
.blue input:checked {
  background: #4c76b0;
}
.blue input:checked::before, .white:checked::before {
  content: "";
  display: block;
  width: 8px;
  height: 4px;
  margin: 3px 2px;
  border: solid #fff;
  border-width: 0 0 2px 2px;
  transform: rotate(-45deg);
}

/* node canvas */
.canvas {
  position: relative;
  flex: 1;
  overflow: hidden;
  background: #232323;
  font-size: 8px;
  line-height: 12px;
}
.layer {
  position: absolute;
  inset: 0;
  width: 100%;
  height: 100%;
  pointer-events: none;
}
.toggle {
  position: absolute;
  top: 17px;
  color: #aaa;
}
.toolbar {
  left: 0;
}
.sidebar {
  right: 0;
}
.context {
  position: absolute;
  bottom: 26px;
  left: 30px;
  color: #fff;
  font-size: 11px;
  line-height: 16px;
}
.node {
  position: absolute;
  border-radius: 3px;
  background: #404040;
  box-shadow: 0 1px 5px 1px rgba(0, 0, 0, 0.6);
}
.node.selected {
  outline: 1px solid #eee;
}
.node header {
  display: flex;
  align-items: center;
  gap: 3px;
  height: 13px;
  padding-left: 5px;
  border-radius: 3px 3px 0 0;
}
.node-body {
  padding: 4px 7px 2px 8px;
}
.socket-row {
  position: relative;
  height: 15px;
  padding-top: 2px;
}
.out {
  padding-right: 5px;
  text-align: right;
}
.out + .in {
  margin-top: 1px;
}
.socket {
  position: absolute;
  top: 4px;
  left: -12px;
  width: 8px;
  height: 8px;
  border: 1px solid #1c1c2c;
  border-radius: 50%;
}
.out .socket {
  right: -11px;
  left: auto;
}
.purple {
  background: #6b68c0;
}
.yellow {
  background: #c7c742;
}
.gray {
  background: #a1a1a1;
}
.green {
  background: #63c763;
}
.node-select {
  display: flex;
  align-items: center;
  gap: 17px;
  height: 13px;
  margin: 6px 0 3px;
}
.node-select.tight {
  margin-top: 0;
}
.field {
  display: flex;
  flex: 1;
  align-items: center;
  height: 12px;
  padding: 0 1px 0 4px;
  border-radius: 2px;
  background: #2b2b2b;
}
.vector p {
  height: 15px;
  margin: 0;
  padding: 2px 0 1px;
}
.vector-fields {
  position: relative;
  display: grid;
  gap: 1px;
  margin-bottom: 3px;
}
.vector-fields .socket {
  top: 10px;
}
.vector-fields label, .ramp-fields label {
  display: flex;
  height: 12px;
  padding: 0 10px;
  background: #585858;
}
.vector-fields input, .ramp-fields label input {
  flex: 1;
  width: 20px;
  text-align: right;
}
.vector-fields label:first-of-type {
  border-radius: 2px 2px 0 0;
}
.vector-fields label:last-of-type {
  border-radius: 0 0 2px 2px;
}
.object {
  display: flex;
  align-items: center;
  gap: 3px;
  height: 12px;
  margin-top: 7px;
}
.object-field {
  display: flex;
  flex: 1;
  align-items: center;
  height: 12px;
  padding: 0 1px;
  border-radius: 2px;
  background: #1d1d1d;
}
.object-field input {
  flex: 1;
  width: 10px;
}
.check.small {
  height: 15px;
  margin: 3px 0 1px;
}
.check.small input {
  width: 8px;
  height: 8px;
  border-radius: 1px;
}
.strength {
  position: relative;
  display: flex;
  justify-content: center;
  gap: 6px;
  height: 12px;
  margin: 2px 0;
  border-radius: 2px;
  background: #585858;
}
.strength input {
  width: 24px;
}
.strength .socket {
  top: 2px;
}
.ramp {
  display: grid;
  margin: 10px 0 4px;
}
.ramp-tools {
  display: flex;
  gap: 7px;
  height: 12px;
  padding-left: 2px;
}
.ramp-tools .more {
  margin: 0 10px 0 5px;
}
.ramp-tools .field {
  flex: 5;
  padding-left: 3px;
}
.ramp-tools .field + .field {
  flex: 6;
  margin-left: -6px;
}
.gradient {
  position: relative;
  height: 14px;
  margin: 4px 4px 8px 4px;
  border: 1px solid #000;
  background: linear-gradient(90deg, #123c55, #245c7c 20%, #5f9cb9 45%, #93cde6 80%, #a3daf2);
}
.stop {
  position: absolute;
  top: -2px;
  margin-left: -4px;
}
.ramp-fields {
  display: flex;
  gap: 6px;
}
.ramp-fields > input {
  width: 41px;
  height: 12px;
  border-radius: 2px;
  background: #585858;
  text-align: center;
}
.ramp-fields label {
  flex: 1;
  border-radius: 2px;
}
.swatch {
  height: 12px;
  margin-top: 5px;
  border-radius: 2px;
  background: #235877;
}

/* right side */
.right {
  display: flex;
  flex: none;
  flex-direction: column;
  gap: 4px;
  width: 330px;
}
.outliner {
  height: 169px;
  overflow: hidden;
  border-radius: 5px;
  background: #282828;
}
.right .bar {
  height: 25px;
  padding: 0 6px 1px 9px;
}
.right .bar .box + .box {
  margin-left: 7px;
}
.right .bar .lit {
  margin-left: 6px;
  border-radius: 3px;
  color: #d0d0d0;
}
.before-search {
  flex: 5;
}
.after-search {
  flex: 7;
}
.outliner .after-search {
  flex: 12;
}
.search {
  display: flex;
  align-items: center;
  width: 110px;
  height: 18px;
  padding-left: 3px;
  border: 1px solid #404040;
  border-radius: 3px;
  background: #1d1d1d;
}
.search input {
  width: 80px;
}
.tree {
  margin: 0;
  padding: 2px 0 0;
  list-style: none;
}
.tree li {
  display: flex;
  align-items: center;
  height: 20px;
  padding-right: 6px;
  color: #c8c8c8;
}
.tree li:nth-child(even) {
  background: #2d2d2d;
}
.tree .depth0 {
  padding-left: 7px;
}
.tree .depth1 {
  padding-left: 24px;
}
.tree .depth3 {
  padding-left: 28px;
}
.tree .depth3::before {
  content: "";
  align-self: stretch;
  width: 1px;
  margin-right: 15px;
  background: #5a5a5a;
}
.arrow {
  width: 14px;
}
.depth1 .arrow {
  width: 18px;
}
.depth3 .arrow {
  width: 18px;
}
.tree-icon {
  display: flex;
  width: 18px;
  margin-right: 4px;
}
.ringed {
  justify-content: center;
  padding: 2px 0;
  border-radius: 4px;
  background: #505050;
  color: #eee;
}
.data {
  margin-left: 19px;
  padding: 2px;
  border-radius: 4px;
  color: #25a37b;
}
.data.lens {
  background: #4d6a61;
  color: #30c294;
}
.tree button {
  width: 20px;
  height: 20px;
  color: #d8d8d8;
}
.white {
  width: 11px;
  height: 11px;
  margin-right: 4px;
  border-radius: 1px;
  background: #e0e0e0;
}
.white:checked::before {
  width: 7px;
  margin: 2px;
  border-color: #222;
}
.muted > span {
  opacity: 0.5;
}
.muted > .data {
  opacity: 0.7;
}
.properties {
  display: flex;
  flex: 1;
  flex-direction: column;
  overflow: hidden;
  border-radius: 5px 5px 5px 0;
}
.prop-main {
  display: flex;
  flex: 1;
}
.prop-tabs {
  width: 28px;
  padding: 9px 0 0 2px;
  background: #212121;
}
.prop-tabs button {
  width: 26px;
  height: 26px;
  margin-bottom: 2px;
  border-radius: 4px 0 0 4px;
  background: #2a2a2a;
  color: #c4c4c4;
}
.prop-tabs .apart {
  margin-top: 10px;
}
.prop-tabs .active {
  background: #424242;
  color: #eee;
}
.prop-tabs .red {
  color: #c0606a;
}
.prop-tabs .orange {
  color: #9c7453;
}
.prop-tabs .azure {
  color: #6f92cc;
}
.prop-tabs .mint {
  color: #2aa980;
}
.panels {
  flex: 1;
  background: #424242;
}
.tool-row {
  display: flex;
  align-items: center;
  gap: 7px;
  height: 36px;
  padding-left: 15px;
}
.panels .modes {
  margin: 3px 0 9px 9px;
}
h2, h3 {
  display: flex;
  align-items: center;
  gap: 5px;
  height: 25px;
  margin: 0;
  padding: 0 4px 0 7px;
  font-size: 12px;
  font-weight: normal;
}
h2 svg, h3 svg {
  color: #a0a0a0;
}
h3 {
  height: 24px;
  padding-left: 21px;
  background: #393939;
  font-size: 11px;
}
fieldset {
  display: grid;
  grid-template-columns: 115px 1fr;
  column-gap: 9px;
  margin: 0;
  padding: 8px 0 7px;
  border: 0;
  background: #303030;
}
legend {
  float: left;
  padding: 2px 0;
  text-align: right;
}
fieldset .check {
  grid-column: 2;
  height: 20px;
}

/* status bar */
.status {
  display: flex;
  align-items: center;
  justify-content: space-between;
  flex: none;
  height: 19px;
  padding: 0 17px 0 9px;
  background: #303030;
  color: #a8a8a8;
}
.hints {
  display: flex;
  gap: 220px;
}

/* desktop taskbar */
.taskbar {
  display: flex;
  align-items: center;
  flex: none;
  height: 40px;
  background: linear-gradient(90deg, #cfe5f0, #cfe5f0 50%, #d5dcec 90%);
  color: #111;
  font-family: "Open Sans", sans-serif;
}
.start {
  width: 52px;
  height: 40px;
  padding-right: 4px;
  color: #000;
}
.app {
  width: 45px;
  height: 40px;
  margin-right: 4px;
  border: solid transparent;
  border-width: 2px 0;
}
.open {
  border-bottom-color: #2274a5;
}
.many {
  border-image: linear-gradient(90deg, #2274a5 80%, #78acc9 80%) 2;
  border-top: 0;
}
.current {
  background: #edf5fa;
  border-bottom-color: #2274a5;
}
.weather {
  display: flex;
  align-items: center;
  gap: 9px;
  font-size: 14px;
}
.tray {
  display: flex;
  align-items: center;
  gap: 7px;
  padding: 0 13px 0 15px;
  font-size: 12px;
}
.clock {
  display: flex;
  flex-direction: column;
  align-items: center;
  font-size: 11px;
  line-height: 18px;
}
.notify {
  position: relative;
  width: 43px;
  height: 40px;
  margin-left: 10px;
  margin-right: 4px;
  padding-right: 10px;
  border-right: 1px solid #aab2c0;
}
.notify b {
  position: absolute;
  right: 10px;
  bottom: 4px;
  width: 18px;
  height: 18px;
  border: 1px solid #777;
  border-radius: 50%;
  background: #dcdfe3;
  font-size: 10px;
  font-weight: normal;
  line-height: 16px;
}
</style>
